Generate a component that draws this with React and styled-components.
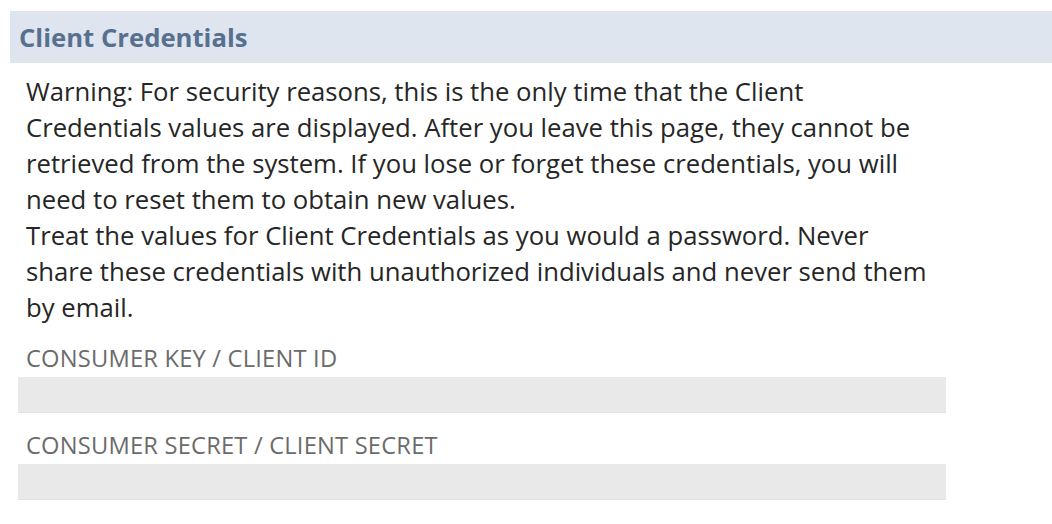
import React from 'react';
import { styled, createGlobalStyle } from 'styled-components';

const GlobalStyle = createGlobalStyle`
  body {
    margin: 0;
    background: #fff;
    font-family: 'Open Sans', 'Noto Sans', sans-serif;
  }
`;

const App = () => {
  return (
    <Wrapper>
      <GlobalStyle />
      <Header>
        <Title>Client Credentials</Title>
      </Header>
      <Content>
        <Notice>
          Warning: For security reasons, this is the only time that the Client
          Credentials values are displayed. After you leave this page, they
          cannot be retrieved from the system. If you lose or forget these
          credentials, you will need to reset them to obtain new values.
        </Notice>
        <Notice>
          Treat the values for Client Credentials as you would a password.
          Never share these credentials with unauthorized individuals and never
          send them by email.
        </Notice>
        <Field>
          <Label>Consumer Key / Client ID</Label>
          <Value />
        </Field>
        <Field>
          <Label>Consumer Secret / Client Secret</Label>
          <Value />
        </Field>
      </Content>
    </Wrapper>
  );
};

const Wrapper = styled.div`
  padding-top: 11px;
  padding-left: 10px;
`;

const Header = styled.div`
  height: 52px;
  display: flex;
  align-items: center;
  padding-left: 9px;
  background-color: #dfe5ef;
`;

const Title = styled.h2`
  margin: 0;
  font-size: 25.7px;
  font-weight: 700;
  color: #58708f;
`;

const Content = styled.div`
  padding: 11px 0 0 8px;
`;

const Notice = styled.p`
  margin: 0 0 0 8px;
  max-width: 914px;
  font-size: 25.7px;
  line-height: 36px;
  color: #262626;
`;

const Field = styled.div`
  margin-top: 17px;
`;

const Label = styled.div`
  margin-left: 8px;
  font-size: 23.7px;
  letter-spacing: 0.2px;
  line-height: 30px;
  text-transform: uppercase;
  color: #6b6b6b;
`;

const Value = styled.div`
  width: 928px;
  height: 36px;
  margin-top: 4px;
  background-color: #e9e9e9;
  border-bottom: 1px solid #e2e2e2;
  box-sizing: border-box;
`;

export default App;
